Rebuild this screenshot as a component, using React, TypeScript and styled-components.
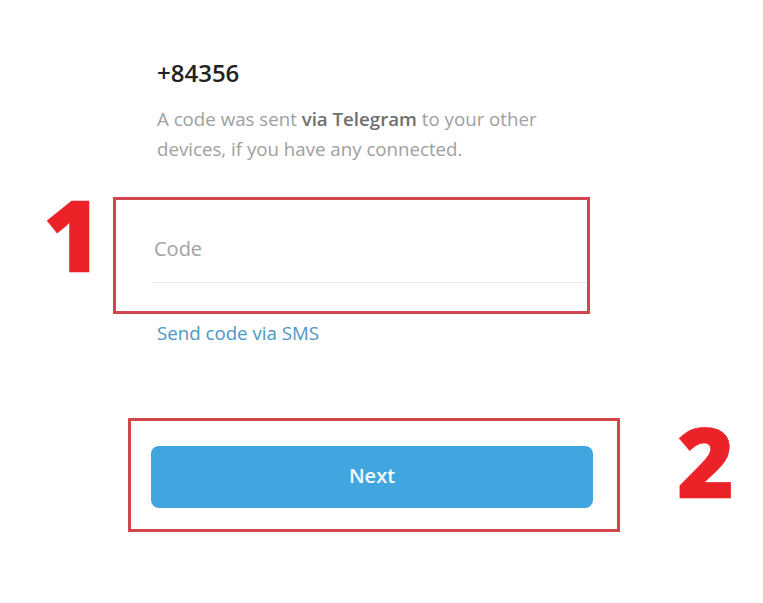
import React from "react";
import styled, { createGlobalStyle } from "styled-components";

const GlobalStyle = createGlobalStyle`
  html, body {
    margin: 0;
    padding: 0;
    background: #ffffff;
  }
  body {
    font-family: "Open Sans", "Noto Sans", sans-serif;
  }
  * { box-sizing: border-box; }
`;

const Page = styled.main`
  width: 763px;
  min-height: 603px;
  padding-top: 57px;
  display: flex;
  flex-direction: column;
  background: #ffffff;
`;

const Intro = styled.section`
  margin-left: 157px;
  display: flex;
  flex-direction: column;
`;

const Phone = styled.h1`
  margin: 0;
  font-size: 24px;
  line-height: 32px;
  font-weight: 600;
  color: #222222;
`;

const Hint = styled.p`
  margin: 15px 0 0;
  width: 410px;
  font-size: 18.7px;
  line-height: 30px;
  color: #a0a0a0;
  b {
    font-weight: 600;
    color: #6f6f6f;
  }
`;

const StepRow = styled.div<{ $top: number; $left: number }>`
  display: flex;
  align-items: flex-start;
  margin-top: ${(p) => p.$top}px;
  padding-left: ${(p) => p.$left}px;
`;

const StepNumber = styled.span<{ $size: number; $width?: number; $offset?: number; $left?: number }>`
  display: block;
  width: ${(p) => (p.$width ? `${p.$width}px` : "auto")};
  margin-top: ${(p) => p.$offset ?? 0}px;
  margin-left: ${(p) => p.$left ?? 0}px;
  font-family: "Open Sans", "Liberation Sans", sans-serif;
  font-weight: 800;
  font-size: ${(p) => p.$size}px;
  line-height: ${(p) => p.$size}px;
  color: #ec2229;
  -webkit-text-stroke: 0.5px #ec2229;
`;

const Highlight = styled.div<{ $width: number; $top?: number; $pad: string }>`
  width: ${(p) => p.$width}px;
  margin-top: ${(p) => p.$top ?? 0}px;
  border: 3px solid #d2464d;
  padding: ${(p) => p.$pad};
  display: flex;
  flex-direction: column;
`;

const CodeInput = styled.input`
  display: block;
  width: calc(100% - 36px);
  margin: 15px 0 0 36px;
  height: 68px;
  padding: 0 0 0 2px;
  border: none;
  border-bottom: 1px solid #e6e6e6;
  outline: none;
  background: transparent;
  font-family: "Open Sans", sans-serif;
  font-size: 20px;
  color: #222;
  &::placeholder {
    color: #a2a2a2;
  }
`;

const SmsLink = styled.a`
  display: block;
  margin: 4px 0 0 157px;
  font-size: 18.7px;
  line-height: 30px;
  color: #4c97c3;
  text-decoration: none;
  cursor: pointer;
  align-self: flex-start;
`;

const NextButton = styled.button`
  width: 442px;
  height: 62px;
  border: none;
  border-radius: 8px;
  background: #41a5df;
  color: #f2fcff;
  font-family: "Open Sans", sans-serif;
  font-size: 20px;
  font-weight: 600;
  padding: 0 0 4px;
  display: flex;
  align-items: center;
  justify-content: center;
  cursor: pointer;
`;

export default function App() {
  return (
    <>
      <GlobalStyle />
      <Page>
        <Intro>
          <Phone>+84356</Phone>
          <Hint>
            A code was sent <b>via Telegram</b> to your other devices, if you have any connected.
          </Hint>
        </Intro>

        <StepRow $top={19} $left={43}>
          <StepNumber $size={100} $width={70}>
            1
          </StepNumber>
          <Highlight $width={477} $top={14} $pad="0 0 28px 0">
            <CodeInput placeholder="Code" />
          </Highlight>
        </StepRow>

        <SmsLink>Send code via SMS</SmsLink>

        <StepRow $top={70} $left={128}>
          <Highlight $width={492} $pad="25px 24px 21px 20px">
            <NextButton>Next</NextButton>
          </Highlight>
          <StepNumber $size={98} $offset={-7} $left={57}>
            2
          </StepNumber>
        </StepRow>
      </Page>
    </>
  );
}
